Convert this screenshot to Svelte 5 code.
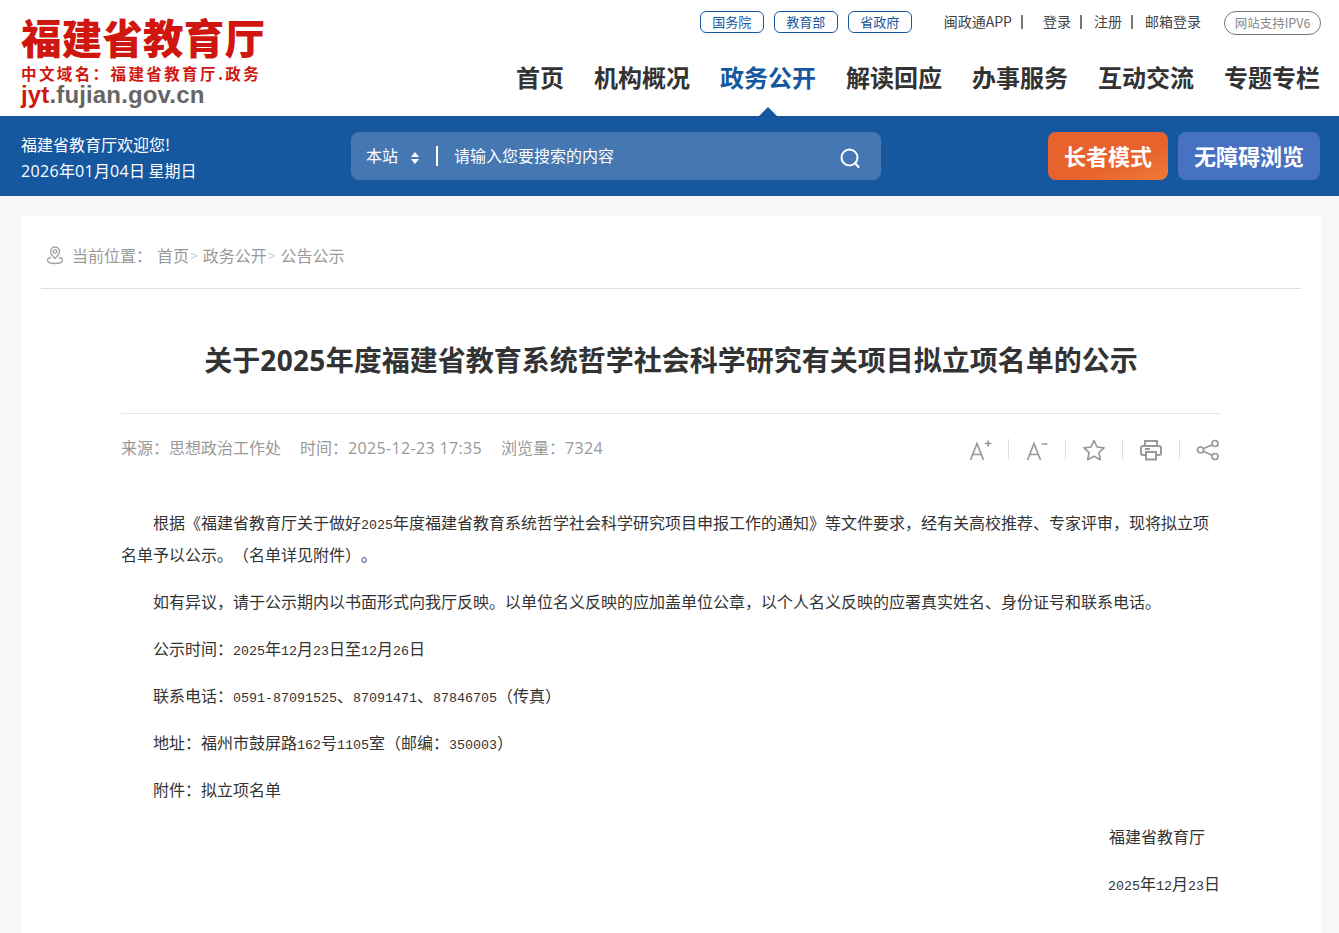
<script>
  const links = ['国务院', '教育部', '省政府'];
  const nav = ['首页', '机构概况', '政务公开', '解读回应', '办事服务', '互动交流', '专题专栏'];
  const account = ['闽政通APP', '登录', '注册', '邮箱登录'];
  // digits in the body copy are set narrower than the CJK text
  const paragraphs = [
    ['根据《福建省教育厅关于做好', '2025', '年度福建省教育系统哲学社会科学研究项目申报工作的通知》等文件要求，经有关高校推荐、专家评审，现将拟立项名单予以公示。（名单详见附件）。'],
    ['如有异议，请于公示期内以书面形式向我厅反映。以单位名义反映的应加盖单位公章，以个人名义反映的应署真实姓名、身份证号和联系电话。'],
    ['公示时间：', '2025', '年', '12', '月', '23', '日至', '12', '月', '26', '日'],
    ['联系电话：', '0591-87091525', '、', '87091471', '、', '87846705', '（传真）'],
    ['地址：福州市鼓屏路', '162', '号', '1105', '室（邮编：', '350003', '）'],
    ['附件：拟立项名单']
  ];
</script>

<div class="page">
  <header class="top">
    <div class="logo">
      <div class="logo-name">福建省教育厅</div>
      <div class="logo-cn">中文域名：福建省教育厅.政务</div>
      <div class="logo-url"><b>jyt</b>.fujian.gov.cn</div>
    </div>
    <div class="top-right">
      <div class="util">
        <div class="pills">
          {#each links as l}<a class="pill">{l}</a>{/each}
        </div>
        <div class="account">
          {#each account as a, i}
            <a>{a}</a>{#if i < 3}<i></i>{/if}
          {/each}
        </div>
        <span class="ipv6">网站支持IPV6</span>
      </div>
      <nav>
        {#each nav as n}
          <a class:active={n === '政务公开'}>{n}</a>
        {/each}
      </nav>
    </div>
  </header>

  <section class="band">
    <div class="welcome">
      <p>福建省教育厅欢迎您!</p>
      <p><span class="lat">2026</span>年<span class="lat">01</span>月<span class="lat">04</span>日 星期日</p>
    </div>
    <div class="search">
      <span class="scope">本站</span>
      <svg class="updown" width="10" height="14" viewBox="0 0 10 14"><path d="M5 1 9 6H1zM5 13 1 8h8z" fill="#fff" /></svg>
      <span class="bar"></span>
      <span class="hint">请输入您要搜索的内容</span>
      <svg class="mag" width="22" height="22" viewBox="0 0 22 22" fill="none" stroke="#fff" stroke-width="2" stroke-linecap="round"><circle cx="10.5" cy="10.5" r="8" /><path d="m16 16 3.5 4" /></svg>
    </div>
    <div class="modes">
      <a class="elder">长者模式</a>
      <a class="access">无障碍浏览</a>
    </div>
  </section>

  <main class="card">
    <div class="crumbs">
      <svg width="20" height="20" viewBox="0 0 20 20" fill="none" stroke="#a0a0a0" stroke-width="1.3"><path d="M10 13.5C7.500 11 5.500 9 5.500 6.500a4.500 4.500 0 0 1 9 0C14.500 9 12.500 11 10 13.500z" /><circle cx="10" cy="6.500" r="1.800" /><path d="M6 12.500c-2.500.6-4 1.800-3.500 3.300.5 1.700 3.500 2.700 7.500 2.700s7-1 7.500-2.700c.5-1.500-1-2.700-3.500-3.300" /></svg>
      <span class="here">当前位置：</span>
      <a>首页</a><em>&gt;</em>
      <a>政务公开</a><em>&gt;</em>
      <a>公告公示</a>
    </div>

    <article>
      <h1>关于<span class="lat">2025</span>年度福建省教育系统哲学社会科学研究有关项目拟立项名单的公示</h1>
      <div class="meta">
        <div class="info">
          <span>来源：思想政治工作处</span>
          <span>时间：<span class="lat">2025-12-23 17:35</span></span>
          <span>浏览量：<span class="lat">7324</span></span>
        </div>
        <div class="tools">
          <span class="tool"><svg width="24" height="24" viewBox="0 0 24 24" fill="none" stroke="#999" stroke-width="1.700"><path d="M2.500 22 9 5.500 15.500 22M5 16.500h8M17 5.500h6.500M20.200 2.500v6" /></svg></span>
          <span class="tool"><svg width="24" height="24" viewBox="0 0 24 24" fill="none" stroke="#999" stroke-width="1.700"><path d="M2.500 22 9 5.500 15.500 22M5 16.500h8M16.500 6h6" /></svg></span>
          <span class="tool"><svg width="24" height="24" viewBox="0 0 24 24" fill="none" stroke="#999" stroke-width="1.700" stroke-linejoin="round"><path d="m12 2.500 3 6.500 7 .9-5.100 4.800 1.400 7L12 18.200 5.700 21.700l1.400-7L2 9.900 9 9z" /></svg></span>
          <span class="tool"><svg width="24" height="24" viewBox="0 0 24 24" fill="none" stroke="#999" stroke-width="2"><path d="M6 8V3h12v5M6 17H4a2 2 0 0 1-2-2v-5a2 2 0 0 1 2-2h16a2 2 0 0 1 2 2v5a2 2 0 0 1-2 2h-2M7 14h10v7.500H7zM6 11h5" /></svg></span>
          <span class="tool"><svg width="24" height="24" viewBox="0 0 24 24" fill="none" stroke="#999" stroke-width="1.700"><circle cx="4.500" cy="12" r="3" /><circle cx="19" cy="5.500" r="3" /><circle cx="19" cy="18.500" r="3" /><path d="m7.200 10.800 9.100-4.100M7.200 13.200l9.100 4.100" /></svg></span>
        </div>
      </div>

      <div class="body">
        {#each paragraphs as p}
          <p>
            {#each p as part, i}{#if i % 2}<span class="num">{part}</span>{:else}{part}{/if}{/each}
          </p>
        {/each}
        <p class="sign first-sign">福建省教育厅</p>
        <p class="sign"><span class="num">2025</span>年<span class="num">12</span>月<span class="num">23</span>日</p>
      </div>
    </article>
  </main>
</div>

<style>
  :global(body) {
    margin: 0;
    background: #f7f7f7;
  }
  .page {
    font-family: "Noto Sans CJK SC", "Noto Sans", sans-serif;
    height: 933px;
    overflow: hidden;
    color: #333;
    text-spacing-trim: space-all;
  }
  a {
    color: inherit;
  }
  p {
    margin: 0;
  }
  .lat {
    font-family: "Open Sans", sans-serif;
    letter-spacing: 0.35px;
  }

  .top {
    display: flex;
    justify-content: space-between;
    height: 116px;
    padding: 0 18px 0 21px;
    background: #fff;
  }
  .logo {
    padding-top: 12px;
  }
  .logo-name {
    height: 51px;
    color: #d0170f;
    font-family: "Noto Sans CJK SC", sans-serif;
    font-size: 40.500px;
    font-weight: 900;
    line-height: 50px;
    letter-spacing: 0.2px;
    white-space: nowrap;
  }
  .logo-cn {
    height: 20px;
    color: #d0170f;
    font-size: 15.500px;
    font-weight: 700;
    line-height: 20px;
    letter-spacing: 2.400px;
    white-space: nowrap;
  }
  .logo-url {
    color: #666;
    font-family: "Liberation Sans", sans-serif;
    font-size: 24px;
    font-weight: 700;
    line-height: 24px;
    letter-spacing: 0.15px;
  }
  .logo-url b {
    color: #d0170f;
  }

  .top-right {
    display: flex;
    flex-direction: column;
    align-items: flex-end;
  }
  .util {
    display: flex;
    align-items: center;
    height: 22px;
    margin-top: 11px;
  }
  .pills {
    display: flex;
    gap: 10px;
    margin-right: 32px;
  }
  .pill {
    box-sizing: border-box;
    width: 64px;
    height: 22px;
    border: 1px solid #16589f;
    border-radius: 6px;
    color: #16589f;
    font-size: 13px;
    line-height: 19px;
    text-align: center;
  }
  .account {
    display: flex;
    align-items: center;
    font-size: 14px;
    line-height: 20px;
    color: #444;
    margin-top: -2px;
  }
  .account i {
    width: 2px;
    height: 14px;
    margin: 2px 12px 0 9px;
    background: #777;
  }
  .account i:first-of-type {
    margin-right: 20px;
  }
  .ipv6 {
    box-sizing: border-box;
    width: 97px;
    height: 24px;
    margin: 2px 0 0 23px;
    border: 1px solid #777;
    border-radius: 12px;
    color: #888;
    font-size: 12.500px;
    line-height: 21px;
    text-align: center;
  }
  nav {
    display: flex;
    gap: 30px;
    margin: 26px 1px 0 0;
  }
  nav a {
    position: relative;
    color: #333;
    font-size: 24px;
    font-weight: 700;
    line-height: 36px;
  }
  nav a.active {
    color: #16589f;
  }
  nav a.active::after {
    content: '';
    position: absolute;
    left: 50%;
    bottom: -21px;
    margin-left: -9px;
    border: 9px solid transparent;
    border-top: 0;
    border-bottom-color: #16589f;
  }

  .band {
    display: flex;
    align-items: center;
    height: 80px;
    padding: 0 19px 0 21px;
    background: #16589f;
    color: #fff;
  }
  .welcome {
    width: 330px;
    padding-top: 2px;
    font-size: 16px;
    line-height: 26px;
  }
  .search {
    display: flex;
    align-items: center;
    box-sizing: border-box;
    width: 530px;
    height: 48px;
    margin-right: auto;
    padding: 0 20px 0 15px;
    border-radius: 8px;
    background: #4577b3;
    font-size: 16px;
    line-height: 22px;
  }
  .scope {
    margin-right: 12px;
    margin-top: -3px;
  }
  .updown {
    margin-top: 3px;
  }
  .bar {
    width: 2px;
    height: 20px;
    margin: 0 16px 0 16px;
    background: #fff;
  }
  .hint {
    flex: 1;
    margin-top: -3px;
  }
  .mag {
    margin-top: 3px;
  }
  .modes {
    display: flex;
    gap: 10px;
  }
  .modes a {
    height: 48px;
    border-radius: 8px;
    font-size: 22px;
    font-weight: 700;
    line-height: 46px;
    text-align: center;
  }
  .elder {
    width: 120px;
    background: linear-gradient(160deg, #e7622d 60%, #ee7a37);
  }
  .access {
    width: 142px;
    background: #4672c1;
  }

  .card {
    box-sizing: border-box;
    height: 760px;
    margin: 20px 18px 0 21px;
    padding: 0 20px;
    background: #fff;
  }
  .crumbs {
    display: flex;
    align-items: center;
    box-sizing: border-box;
    height: 73px;
    padding: 5px 0 0 4px;
    border-bottom: 1px solid #ddd;
    color: #999;
    font-size: 16px;
  }
  .crumbs svg {
    margin-right: 7px;
  }
  .here {
    width: 85px;
  }
  .crumbs em {
    margin: 0 5px 0 1px;
    color: #ccc;
    font-style: normal;
    font-size: 14px;
  }

  article {
    padding: 0 80px;
  }
  h1 {
    margin: 0;
    height: 124px;
    border-bottom: 1px solid #e5e5e5;
    color: #333;
    font-size: 28px;
    font-weight: 700;
    line-height: 141px;
    text-align: center;
    white-space: nowrap;
  }
  .meta {
    display: flex;
    align-items: center;
    justify-content: space-between;
    height: 70px;
    color: #999;
    font-size: 16px;
  }
  .info {
    display: flex;
    gap: 19px;
    margin-top: -4px;
  }
  .tools {
    display: flex;
    margin-right: 1px;
  }
  .tool {
    display: flex;
    height: 20px;
    padding: 0 16px;
    border-left: 1px solid #ddd;
  }
  .tool:first-child {
    border-left: 0;
  }
  .tool:last-child {
    padding-right: 0;
  }
  .tool svg {
    margin-top: -1px;
  }
  .body {
    padding-top: 22px;
    color: #333;
    font-size: 16px;
    line-height: 32px;
  }
  .body p {
    margin-bottom: 15px;
    text-indent: 32px;
  }
  .num {
    font-family: "Liberation Mono", monospace;
    font-size: 13.340px;
    line-height: 0;
  }
  .body .sign {
    padding-right: 16px;
    text-align: right;
    text-indent: 0;
  }
  .body .sign + .sign {
    padding-right: 1px;
  }
</style>
